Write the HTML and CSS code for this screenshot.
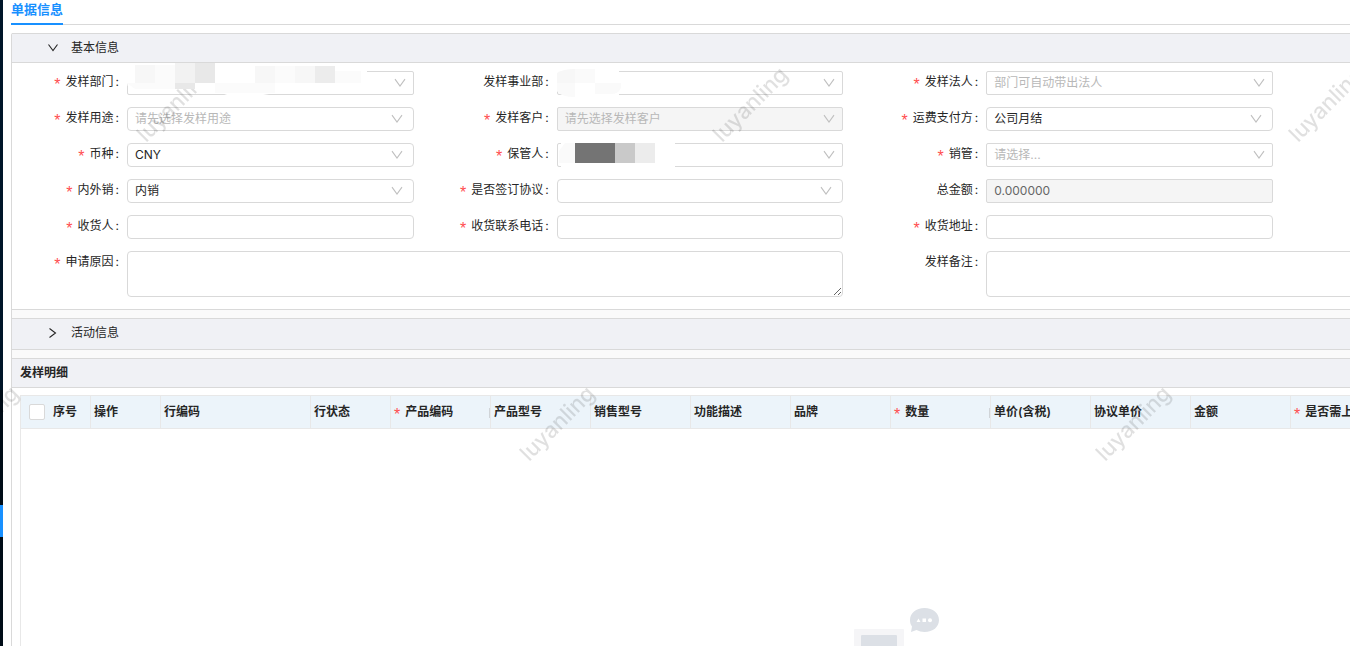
FILE: index.html
```html
<!DOCTYPE html>
<html lang="zh-CN">
<head>
<meta charset="utf-8">
<title>单据信息</title>
<link rel="stylesheet" href="styles.css">
</head>
<body>
<svg class="defs" aria-hidden="true">
  <symbol id="down" viewBox="0 0 12 12"><path d="M1 2.2 6 9l5-6.8" fill="none" stroke="currentColor" stroke-width="1.1"/></symbol>
  <symbol id="fold" viewBox="0 0 12 12"><path d="M1.500 2.500 6 8.500 10.500 2.500" fill="none" stroke="currentColor" stroke-width="1.100"/></symbol>
</svg>
<div class="shell">
  <aside class="rail"><div class="rail-menu"></div><div class="rail-sub"></div><div class="rail-active"></div></aside>
  <main class="view">
    <div class="sheet">
      <nav class="tabs"><button class="tab" type="button">单据信息</button></nav>
      <div class="stack">
        <section class="card">
          <button class="bar" type="button" aria-expanded="true"><svg class="fold"><use href="#fold"/></svg>基本信息</button>
          <form class="form">
            <div class="field"><label class="label req" for="dept">发样部门</label><div class="control"><select id="dept" class="box"><option></option></select><svg class="arrow"><use href="#down"/></svg>
              <svg class="mosaic" width="244" height="34" aria-hidden="true"><path fill="#fff" d="M0 8Q2 0 14 0H76Q100 5 130 3 180 0 208 3H240V24Q238 30 220 31H142Q120 36 100 32 88 27 70 26H10Q0 26 0 20z"/><path fill="#f7f7f7" d="M8 2h20v18H8zM128 3h20v17h-20zM168 3h20v17h-20z"/><path fill="#fbfbfb" d="M28 2h20v18H28zM148 3h20v17h-20zM88 20h60v10H88zM208 8h26v12h-26zM0 20h48v6H8z"/><path fill="#f2f2f2" d="M48 0h20v20H48z"/><path fill="#e8e8e8" d="M68 0h20v20H68zM48 20h20v6H48z"/><path fill="#ececec" d="M188 3h20v17h-20z"/></svg></div></div>
            <div class="field"><label class="label" for="unit">发样事业部</label><div class="control"><select id="unit" class="box"><option></option></select><svg class="arrow"><use href="#down"/></svg>
              <svg class="mosaic" width="64" height="34" aria-hidden="true"><path fill="#fff" d="M0 8Q8 4 16 4H62V32H20Q8 36 0 28z"/><path fill="#f7f7f7" d="M0 10Q6 6 18 6V20H0z"/><path fill="#fafafa" d="M18 6h20v14H18zM38 20h27Q64 31 54 31H38zM0 20h18v14Q4 34 0 28z"/></svg></div></div>
            <div class="field"><label class="label req" for="legal">发样法人</label><div class="control"><select id="legal" class="box hint"><option>部门可自动带出法人</option></select><svg class="arrow"><use href="#down"/></svg></div></div>

            <div class="field start"><label class="label req" for="usage">发样用途</label><div class="control"><select id="usage" class="box round hint"><option>请先选择发样用途</option></select><svg class="arrow inner"><use href="#down"/></svg></div></div>
            <div class="field"><label class="label req" for="client">发样客户</label><div class="control"><select id="client" class="box off hint" disabled><option>请先选择发样客户</option></select><svg class="arrow"><use href="#down"/></svg></div></div>
            <div class="field"><label class="label req" for="payer">运费支付方</label><div class="control"><select id="payer" class="box round"><option>公司月结</option></select><svg class="arrow inner"><use href="#down"/></svg></div></div>

            <div class="field start"><label class="label req" for="currency">币种</label><div class="control"><select id="currency" class="box round"><option>CNY</option></select><svg class="arrow inner"><use href="#down"/></svg></div></div>
            <div class="field"><label class="label req" for="keeper">保管人</label><div class="control"><select id="keeper" class="box"><option></option></select><svg class="arrow"><use href="#down"/></svg>
              <svg class="mosaic" width="122" height="34" aria-hidden="true"><path fill="#fff" d="M4 6H118V34H4z"/><path fill="#fafafa" d="M8 8H20V28H2V16z"/><path fill="#747474" d="M18 8h40v20H18z"/><path fill="#c9c9c9" d="M58 8h20v20H58z"/><path fill="#ececec" d="M78 8h20v20H78z"/></svg></div></div>
            <div class="field"><label class="label req" for="manager">销管</label><div class="control"><select id="manager" class="box hint"><option>请选择...</option></select><svg class="arrow"><use href="#down"/></svg></div></div>

            <div class="field start"><label class="label req" for="market">内外销</label><div class="control"><select id="market" class="box round"><option>内销</option></select><svg class="arrow inner"><use href="#down"/></svg></div></div>
            <div class="field"><label class="label req" for="signed">是否签订协议</label><div class="control"><select id="signed" class="box round"><option></option></select><svg class="arrow inner"><use href="#down"/></svg></div></div>
            <div class="field"><label class="label" for="total">总金额</label><div class="control"><input id="total" class="box off" value="0.000000" disabled></div></div>

            <div class="field start"><label class="label req" for="receiver">收货人</label><div class="control"><input id="receiver" class="box round"></div></div>
            <div class="field"><label class="label req" for="phone">收货联系电话</label><div class="control"><input id="phone" class="box round"></div></div>
            <div class="field"><label class="label req" for="address">收货地址</label><div class="control"><input id="address" class="box round"></div></div>

            <div class="field start wide"><label class="label req" for="reason">申请原因</label><div class="control"><textarea id="reason" class="box round area"></textarea></div></div>
            <div class="field wide"><label class="label" for="remark">发样备注</label><div class="control"><textarea id="remark" class="box round area"></textarea></div></div>
          </form>
        </section>
        <section class="card">
          <button class="bar closed" type="button" aria-expanded="false"><svg class="fold"><use href="#fold"/></svg>活动信息</button>
        </section>
        <section class="card detail">
          <h2 class="title">发样明细</h2>
          <div class="grid">
            <table class="table">
              <colgroup><col class="w70"><col class="w70"><col class="w150"><col class="w80"><col class="w100"><col class="w100"><col class="w100"><col class="w100"><col class="w100"><col class="w100"><col class="w100"><col class="w100"><col class="w100"><col></colgroup>
              <thead><tr>
                <th><label class="pick"><input class="check" type="checkbox">序号</label></th>
                <th>操作</th><th>行编码</th><th>行状态</th><th class="req grip">产品编码</th><th>产品型号</th><th>销售型号</th><th>功能描述</th><th>品牌</th><th class="req grip">数量</th><th>单价(含税)</th><th>协议单价</th><th>金额</th><th class="req">是否需上</th>
              </tr></thead>
            </table>
            <div class="empty">
              <svg width="136" height="110" viewBox="0 0 136 110" aria-hidden="true">
                <rect x="51" y="21" width="50" height="80" rx="1" fill="#f5f5f7"/>
                <rect x="58" y="27" width="36" height="30" rx="1" fill="#dce0e6"/>
                <path fill="#dce0e6" d="M121.500 0C130 0 136 5 136 12s-6 12-14.500 12c-3 0-5.500-.8-8-2L108 24l1-5.500C107.500 16.500 107 14.500 107 12 107 5 113 0 121.500 0z"/>
                <path fill="#fff" d="m113.500 14 2-3.500 2 3.500zM119.500 10.500h3.500v3.500h-3.500z"/><circle cx="127" cy="12.200" r="2" fill="#fff"/>
              </svg>
            </div>
          </div>
        </section>
      </div>
    </div>
  </main>
</div>
<div class="marks" aria-hidden="true">
  <span class="mark m1">luyanling</span><span class="mark m2">luyanling</span><span class="mark m3">luyanling</span>
  <span class="mark m4">luyanling</span><span class="mark m5">luyanling</span><span class="mark m6">luyanling</span>
</div>
</body>
</html>
```
FILE: styles.css
```css
* { box-sizing: border-box; }
html, body { height: 100%; margin: 0; overflow: hidden; }
body, button, input, select, textarea {
  font-family: Inter, "Noto Sans CJK SC", sans-serif;
  font-size: 12px;
  line-height: 20px;
  color: #262626;
}
body { background: #fff; }
.defs { position: absolute; width: 0; height: 0; }

.shell { display: flex; height: 100%; }
.rail { display: flex; flex-direction: column; flex: none; width: 3px; background: #000c17; }
.rail-menu { height: 390px; background: #001529; }
.rail-sub { height: 115px; }
.rail-active { height: 32px; background: #1890ff; }
.view { flex: 1; min-width: 0; padding-left: 8px; overflow: hidden; }
.sheet { display: flex; flex-direction: column; width: 128.5%; height: 100%; }

.tabs { display: flex; flex: none; height: 25px; margin-bottom: 8px; border-bottom: 1px solid #d9d9d9; }
.tab {
  height: 25px; padding: 0 0 6px; border: 0; border-bottom: 2px solid #1890ff;
  background: none; color: #1890ff; font-size: 13px; line-height: 16px; font-weight: 700;
}

.stack {
  display: flex; flex-direction: column; flex: 1; gap: 8px;
  border: solid #d9d9d9; border-width: 0 1px; border-radius: 2px 2px 0 0; background: #fafafa;
}
.card { border: solid #d9d9d9; border-width: 1px 0; background: #fff; }
.detail { flex: 1; }
.bar {
  display: flex; align-items: center; gap: 12px; width: 100%; height: 29px; padding: 0 0 0 35px;
  border: 0; border-bottom: 1px solid #d9d9d9; background: #f0f1f5;
}
.bar.closed { height: 30px; padding-bottom: 2px; border-bottom: 0; }
.fold { width: 12px; height: 12px; }
.closed .fold { transform: rotate(-90deg); }

.form { display: grid; grid-template-columns: repeat(4, 1fr); gap: 12px 0; padding: 8px 0 12px; }
.field { display: flex; min-width: 0; padding-right: 28px; }
.start { grid-column-start: 1; }
.wide { grid-column-end: span 2; }
.label { flex: none; width: 115px; padding-right: 8px; line-height: 22px; text-align: right; }
.label::after { content: ":"; margin-left: 2px; }
.req::before { content: "*"; margin-right: 5px; color: #ff4d4f; font-family: "Liberation Sans", sans-serif; font-size: 16px; line-height: 12px; font-weight: 400; vertical-align: -4px; }
.control { position: relative; flex: 1; min-width: 0; }
.box {
  display: block; width: 100%; height: 24px; margin: 0; padding: 0 7px;
  border: 1px solid #d9d9d9; border-radius: 2px; background: #fff; outline: 0; appearance: none;
}
.round { border-radius: 4px; }
.hint { color: #b8b8b8; opacity: 1; }
.off { background: #f5f5f5; opacity: 1; }
input.off { padding-bottom: 2px; color: #666; }
.area { height: 46px; resize: vertical; }
.arrow { position: absolute; top: 6px; right: 8px; width: 12px; height: 12px; color: #bfbfbf; pointer-events: none; }
.arrow.inner { right: 11px; }
.mosaic { position: absolute; top: -8px; left: 0; z-index: 3; pointer-events: none; }

.title { height: 29px; margin: 0; padding: 4px 8px; border-bottom: 1px solid #d9d9d9; background: #f0f1f5; font-size: 12px; font-weight: 600; }
.grid { height: calc(100% - 29px); padding: 7px 8px 0; }
.table { width: 100%; border-collapse: separate; border-spacing: 0; table-layout: fixed; border: solid #e8e8e8; border-width: 1px 0 0 1px; }
.table th {
  position: relative; height: 33px; padding: 0 3px; border: solid #e8e8e8; border-width: 0 1px 1px 0;
  background: #ecf4fa; text-align: left; font-weight: 600; white-space: nowrap;
}
.grip::after { content: ""; position: absolute; right: 0; top: 12px; width: 1px; height: 10px; background: #d0d4d8; }
.w70 { width: 70px; }
.w80 { width: 80px; }
.w100 { width: 100px; }
.w150 { width: 150px; }
.pick { display: flex; align-items: center; gap: 8px; padding-left: 5px; }
.check { width: 16px; height: 16px; margin: 0; border: 1px solid #d9d9d9; border-radius: 2px; background: #fff; appearance: none; }
.empty { display: flex; justify-content: center; height: calc(100% - 34px); padding-top: 179px; border: solid #e8e8e8; border-width: 0 1px; }

.marks { position: fixed; inset: 0; z-index: 2; overflow: hidden; pointer-events: none; }
.mark {
  position: absolute; width: 120px; margin: -15px 0 0 -60px; transform: rotate(-45deg);
  color: rgba(0, 0, 0, 0.12); font-size: 22px; line-height: 30px; font-weight: 500; text-align: center;
}
.m1 { left: 174px; top: 104px; }
.m2 { left: 750px; top: 104px; }
.m3 { left: 1326px; top: 104px; }
.m4 { left: -19px; top: 423px; }
.m5 { left: 557px; top: 423px; }
.m6 { left: 1133px; top: 423px; }
```
